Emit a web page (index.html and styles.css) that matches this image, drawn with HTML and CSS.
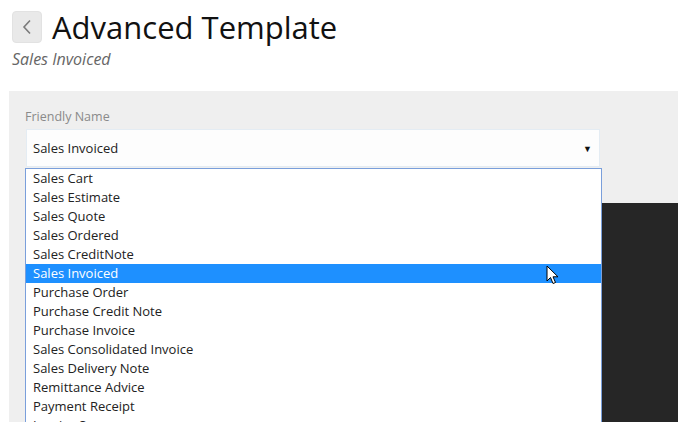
FILE: index.html
```html
<!DOCTYPE html>
<html>
<head>
<meta charset="utf-8">
<link rel="stylesheet" href="styles.css">
</head>
<body>
<header class="header">
  <div class="title-row">
    <button class="back-btn" aria-label="Back">
      <svg width="10" height="16" viewBox="0 0 10 16"><path d="M8 1.5 L2 8 L8 14.5" fill="none" stroke="#7a7a7a" stroke-width="1.6"/></svg>
    </button>
    <h1 class="title">Advanced Template</h1>
  </div>
  <div class="subtitle">Sales Invoiced</div>
</header>
<main class="panel">
  <div class="field">
    <label class="label">Friendly Name</label>
    <div class="select">
      <span class="select-value">Sales Invoiced</span>
      <span class="select-arrow">▼</span>
    </div>
    <ul class="dropdown">
      <li>Sales Cart</li>
      <li>Sales Estimate</li>
      <li>Sales Quote</li>
      <li>Sales Ordered</li>
      <li>Sales CreditNote</li>
      <li class="active">Sales Invoiced</li>
      <li>Purchase Order</li>
      <li>Purchase Credit Note</li>
      <li>Purchase Invoice</li>
      <li>Sales Consolidated Invoice</li>
      <li>Sales Delivery Note</li>
      <li>Remittance Advice</li>
      <li>Payment Receipt</li>
      <li>Invoice Summary</li>
    </ul>
    <svg class="cursor" width="14" height="22" viewBox="0 0 14 22"><path d="M1 1 L1 16 L4.5 12.5 L7 18.5 L9.5 17.5 L7 11.8 L12 11.8 Z" fill="#fff" stroke="#000" stroke-width="1"/></svg>
  </div>
  <div class="preview"></div>
</main>
</body>
</html>
```
FILE: styles.css
```css
html, body {
  margin: 0;
  padding: 0;
  background: #fff;
  font-family: "Open Sans", "Noto Sans", sans-serif;
  overflow: hidden;
  height: 422px;
}
.header {
  padding: 11px 0 0 12px;
  height: 80px;
  box-sizing: border-box;
}
.title-row {
  display: flex;
  align-items: center;
  gap: 10px;
  height: 32px;
}
.back-btn {
  width: 30px;
  height: 32px;
  border: 1px solid #e2e2e2;
  background: #e9e9e9;
  border-radius: 4px;
  padding: 0;
  display: flex;
  align-items: center;
  justify-content: center;
}
.title {
  margin: 0;
  font-size: 31px;
  font-weight: 400;
  line-height: 32px;
  color: #111;
}
.subtitle {
  margin-top: 7px;
  font-size: 16px;
  font-style: italic;
  color: #666;
  line-height: 18px;
}
.panel {
  margin: 11px 0 0 9px;
  background: #efefef;
  height: 331px;
  padding-top: 18px;
  box-sizing: border-box;
}
.field {
  position: relative;
  padding-left: 16px;
  width: 576px;
}
.label {
  display: block;
  font-size: 12.5px;
  line-height: 16px;
  color: #8a8a8a;
  margin-bottom: 4px;
}
.select {
  margin-left: 1px;
  width: 574px;
  height: 38px;
  box-sizing: border-box;
  border: 1px solid #e4ecf3;
  background: #fdfdfd;
  display: flex;
  align-items: center;
  justify-content: space-between;
  padding: 0 7px 0 6px;
  font-size: 13px;
  color: #222;
}
.select-arrow {
  font-size: 9px;
  color: #111;
}
.dropdown {
  position: absolute;
  left: 16px;
  top: 59px;
  width: 577px;
  height: 254px;
  box-sizing: border-box;
  margin: 0;
  padding: 0;
  list-style: none;
  background: #fff;
  border: 1px solid #7a9fdb;
  border-bottom: none;
  overflow: hidden;
  z-index: 2;
}
.dropdown li {
  height: 19px;
  line-height: 19px;
  font-size: 13px;
  color: #222;
  padding-left: 7px;
}
.dropdown li.active {
  background: #1e90ff;
  color: #fff;
}
.cursor {
  position: absolute;
  left: 537px;
  top: 156px;
  z-index: 3;
}
.preview {
  margin: 36px 0 0 16px;
  height: 220px;
  background: #262626;
}
```
